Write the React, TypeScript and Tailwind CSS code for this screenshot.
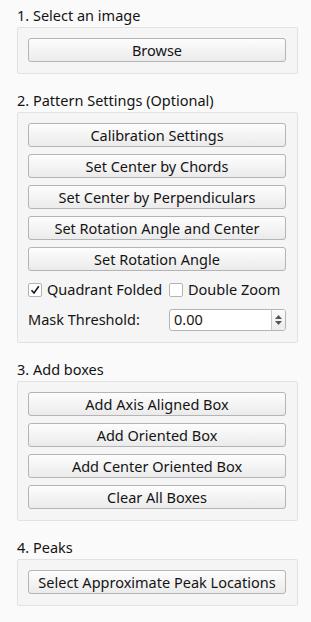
import React from "react";

const font = { fontFamily: '"Noto Sans", "Open Sans", sans-serif' };

function Btn({ label }: { label: string }) {
  return (
    <div className="h-[24px] w-full rounded-[3px] border border-[#b4b4b4] bg-gradient-to-b from-[#fdfdfd] to-[#ebebeb] flex items-center justify-center text-[14.5px] text-[#141414] leading-none">
      {label}
    </div>
  );
}

function Title({ children }: { children: React.ReactNode }) {
  return <div className="h-[23px] leading-[23px] text-[14.5px] text-[#141414] pl-[17px]">{children}</div>;
}

function Frame({ children }: { children: React.ReactNode }) {
  return (
    <div className="ml-[17px] w-[281px] border border-[#e2e2e2] rounded-[2px] bg-[#f5f5f5] pl-[10px] pr-[11px] pt-[10px] pb-[11px]">
      {children}
    </div>
  );
}

function Check({ checked }: { checked: boolean }) {
  return (
    <div className="w-[14px] h-[14px] border border-[#b4b4b4] bg-white rounded-[2px] flex items-center justify-center">
      {checked && (
        <svg width="10" height="10" viewBox="0 0 10 10">
          <path d="M1.5 5.2 L4 8 L8.8 1.2" fill="none" stroke="#141414" strokeWidth="1.5" />
        </svg>
      )}
    </div>
  );
}

export default function App() {
  return (
    <div className="w-[311px] h-[622px] bg-[#fafafa] pt-[4px]" style={font}>
      <Title>1. Select an image</Title>
      <Frame>
        <Btn label="Browse" />
      </Frame>

      <div className="mt-[15px]">
        <Title>2. Pattern Settings (Optional)</Title>
        <Frame>
          <div className="flex flex-col gap-[7px]">
            <Btn label="Calibration Settings" />
            <Btn label="Set Center by Chords" />
            <Btn label="Set Center by Perpendiculars" />
            <Btn label="Set Rotation Angle and Center" />
            <Btn label="Set Rotation Angle" />
          </div>
          <div className="mt-[9px] h-[20px] flex items-center text-[14.5px] text-[#141414]">
            <div className="flex items-center w-[141px]">
              <Check checked />
              <span className="ml-[5px]">Quadrant Folded</span>
            </div>
            <div className="flex items-center">
              <Check checked={false} />
              <span className="ml-[5px]">Double Zoom</span>
            </div>
          </div>
          <div className="mt-[9px] h-[22px] flex items-center text-[14.5px] text-[#141414]">
            <div className="w-[141px]">Mask Threshold:</div>
            <div className="h-[22px] w-[117px] border border-[#b4b4b4] rounded-[3px] bg-white flex overflow-hidden">
              <div className="flex-1 pl-[4px] flex items-center">0.00</div>
              <div className="w-[14px] border-l border-[#c8c8c8] bg-gradient-to-b from-[#fbfbfb] to-[#ececec] flex flex-col items-center justify-center gap-[2px]">
                <svg width="7" height="4" viewBox="0 0 7 4"><path d="M0 4 L3.5 0 L7 4 Z" fill="#555" /></svg>
                <svg width="7" height="4" viewBox="0 0 7 4"><path d="M0 0 L3.5 4 L7 0 Z" fill="#555" /></svg>
              </div>
            </div>
          </div>
        </Frame>
      </div>

      <div className="mt-[15px]">
        <Title>3. Add boxes</Title>
        <Frame>
          <div className="flex flex-col gap-[7px]">
            <Btn label="Add Axis Aligned Box" />
            <Btn label="Add Oriented Box" />
            <Btn label="Add Center Oriented Box" />
            <Btn label="Clear All Boxes" />
          </div>
        </Frame>
      </div>

      <div className="mt-[15px]">
        <Title>4. Peaks</Title>
        <Frame>
          <Btn label="Select Approximate Peak Locations" />
        </Frame>
      </div>
    </div>
  );
}
